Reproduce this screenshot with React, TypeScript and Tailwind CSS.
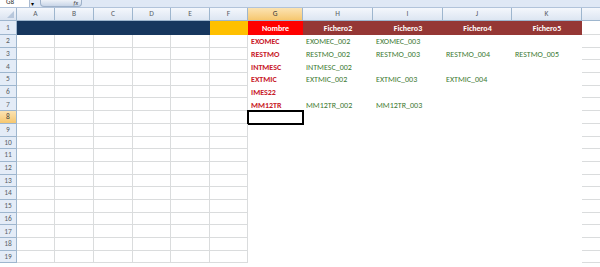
const widths = [38, 39, 39, 38, 39, 38, 55, 70, 70, 69, 70];
const letters = ["A", "B", "C", "D", "E", "F", "G", "H", "I", "J", "K"];

const data: Record<number, string[]> = {
  2: ["EXOMEC", "EXOMEC_002", "EXOMEC_003"],
  3: ["RESTMO", "RESTMO_002", "RESTMO_003", "RESTMO_004", "RESTMO_005"],
  4: ["INTMESC", "INTMESC_002"],
  5: ["EXTMIC", "EXTMIC_002", "EXTMIC_003", "EXTMIC_004"],
  6: ["IMES22"],
  7: ["MM12TR", "MM12TR_002", "MM12TR_003"],
};

const font = { fontFamily: "Carlito, 'Open Sans', 'Liberation Sans', sans-serif" };

function HeaderRow() {
  return (
    <div className="flex h-[13px]">
      <div className="w-[17px] shrink-0 border-r border-b border-[#9eb6ce] bg-gradient-to-b from-[#f4f7fc] to-[#dae3f0] relative">
        <div className="absolute right-[2px] bottom-[2px] w-0 h-0 border-l-[7px] border-l-transparent border-b-[7px] border-b-[#b7c7dc]" />
      </div>
      {letters.map((l, i) => (
        <div
          key={l}
          style={{ width: widths[i] }}
          className={
            "shrink-0 flex items-center justify-center text-[7.5px] border-r border-b border-[#9eb6ce] " +
            (l === "G"
              ? "bg-gradient-to-b from-[#fbe3b2] to-[#f6c76e] text-[#3b3b3b]"
              : "bg-gradient-to-b from-[#f4f7fc] to-[#dde6f2] text-[#5a5f66]")
          }
        >
          {l}
        </div>
      ))}
      <div className="flex-1 border-b border-[#9eb6ce] bg-gradient-to-b from-[#f4f7fc] to-[#dde6f2]" />
    </div>
  );
}

function RowNum({ n, h }: { n: number; h: string }) {
  return (
    <div
      className={
        "w-[17px] shrink-0 flex items-center justify-center text-[7.5px] border-r border-b border-[#9eb6ce] " +
        h +
        (n === 8
          ? " bg-gradient-to-b from-[#fbe3b2] to-[#f6c76e] text-[#3b3b3b]"
          : " bg-[#e4ecf7] text-[#5a5f66]")
      }
    >
      {n}
    </div>
  );
}

function TitleRow() {
  const fills = ["#17375e", "#17375e", "#17375e", "#17375e", "#17375e", "#ffc000", "#ff0000", "#953735", "#953735", "#953735", "#953735"];
  const labels = ["", "", "", "", "", "", "Nombre", "Fichero2", "Fichero3", "Fichero4", "Fichero5"];
  return (
    <div className="flex h-[14px]">
      <RowNum n={1} h="h-[14px]" />
      {widths.map((w, i) => (
        <div
          key={i}
          style={{ width: w, backgroundColor: fills[i] }}
          className="shrink-0 flex items-center justify-center text-[8px] font-bold text-white"
        >
          {labels[i]}
        </div>
      ))}
      <div className="flex-1 border-b border-[#dadcdd]" />
    </div>
  );
}

function DataRow({ n }: { n: number }) {
  const vals = data[n] || [];
  return (
    <div className="flex h-[12.7px]">
      <RowNum n={n} h="h-[12.7px]" />
      {widths.map((w, i) => {
        const inTable = i >= 6;
        const v = inTable ? vals[i - 6] : undefined;
        const selected = n === 8 && i === 6;
        return (
          <div
            key={i}
            style={{ width: w }}
            className={
              "shrink-0 flex items-center pl-[3px] text-[8px] whitespace-nowrap " +
              (inTable ? "" : "border-r border-b border-[#dadcdd] ") +
              (i === 6 ? "font-bold text-[#c8202a] " : "text-[#3d7a32] ") +
              (selected ? "outline-2 outline-black -outline-offset-1" : "")
            }
          >
            {v}
          </div>
        );
      })}
      <div className="flex-1 border-b border-[#dadcdd]" />
    </div>
  );
}

export default function App() {
  const rows = Array.from({ length: 18 }, (_, i) => i + 2);
  return (
    <div className="w-[600px] h-[267px] overflow-hidden bg-white" style={font}>
      <div className="h-[8px] flex items-end bg-[#dfe8f5] border-b border-[#b1c3da] overflow-hidden">
        <div className="w-[30px] h-[8px] bg-white border-r border-[#a9bad1] text-[7px] leading-[6px] pl-[6px] text-[#333]">G8</div>
        <div className="w-[8px] text-[6px] leading-[6px] text-black pl-[1px]">▾</div>
        <div className="ml-[2px] w-[42px] h-[7px] rounded-b-[4px] bg-gradient-to-b from-[#eef2f8] to-[#c9d6e8] border border-t-0 border-[#9eb1c9] flex justify-end pr-[3px] text-[6px] leading-[6px] italic text-[#444]">
          fx
        </div>
      </div>
      <HeaderRow />
      <TitleRow />
      {rows.map((n) => (
        <DataRow key={n} n={n} />
      ))}
    </div>
  );
}
